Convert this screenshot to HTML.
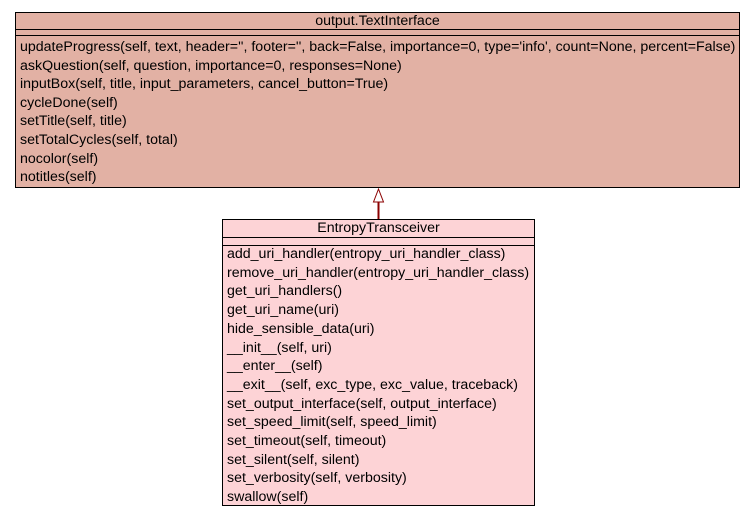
<!DOCTYPE html>
<html><head><style>
body{margin:0;width:755px;height:520px;background:#fff;position:relative;overflow:hidden;font-family:"Liberation Sans",sans-serif;font-size:14.2px;color:#000}
.box{position:absolute;border:1px solid #000;box-sizing:border-box}
.hl{position:absolute;left:0;right:0;height:0;border-top:1px solid #000}
.t{position:absolute;line-height:16px;white-space:nowrap}
</style></head><body>
<div class="box" style="left:15px;top:12px;width:725px;height:176px;background:#e2b1a4">
<div class="t" style="left:0;right:0;text-align:center;top:0">output.TextInterface</div>
<div class="hl" style="top:16px"></div>
<div class="hl" style="top:22px"></div>
<div class="t" style="left:4px;top:26px">updateProgress(self, text, header='', footer='', back=False, importance=0, type='info', count=None, percent=False)</div>
<div class="t" style="left:4px;top:44.6px">askQuestion(self, question, importance=0, responses=None)</div>
<div class="t" style="left:4px;top:63.2px">inputBox(self, title, input_parameters, cancel_button=True)</div>
<div class="t" style="left:4px;top:81.8px">cycleDone(self)</div>
<div class="t" style="left:4px;top:100.4px">setTitle(self, title)</div>
<div class="t" style="left:4px;top:119px">setTotalCycles(self, total)</div>
<div class="t" style="left:4px;top:137.6px">nocolor(self)</div>
<div class="t" style="left:4px;top:156.2px">notitles(self)</div>
</div>
<svg style="position:absolute;left:0;top:0" width="755" height="520">
<line x1="378.5" y1="202" x2="378.5" y2="219" stroke="#8b0000" stroke-width="2"/>
<polygon points="378.5,189 373.5,202 383.5,202" fill="#fff" stroke="#8b0000" stroke-width="1"/>
</svg>
<div class="box" style="left:222px;top:219px;width:313px;height:287px;background:#fdd3d6">
<div class="t" style="left:0;right:0;text-align:center;top:0">EntropyTransceiver</div>
<div class="hl" style="top:17px"></div>
<div class="hl" style="top:25px"></div>
<div class="t" style="left:4px;top:26px">add_uri_handler(entropy_uri_handler_class)</div>
<div class="t" style="left:4px;top:44.7px">remove_uri_handler(entropy_uri_handler_class)</div>
<div class="t" style="left:4px;top:63.4px">get_uri_handlers()</div>
<div class="t" style="left:4px;top:82.1px">get_uri_name(uri)</div>
<div class="t" style="left:4px;top:100.8px">hide_sensible_data(uri)</div>
<div class="t" style="left:4px;top:119.5px">__init__(self, uri)</div>
<div class="t" style="left:4px;top:138.2px">__enter__(self)</div>
<div class="t" style="left:4px;top:156.9px">__exit__(self, exc_type, exc_value, traceback)</div>
<div class="t" style="left:4px;top:175.6px">set_output_interface(self, output_interface)</div>
<div class="t" style="left:4px;top:194.3px">set_speed_limit(self, speed_limit)</div>
<div class="t" style="left:4px;top:213px">set_timeout(self, timeout)</div>
<div class="t" style="left:4px;top:231.7px">set_silent(self, silent)</div>
<div class="t" style="left:4px;top:250.4px">set_verbosity(self, verbosity)</div>
<div class="t" style="left:4px;top:269.1px">swallow(self)</div>
</div>
</body></html>
